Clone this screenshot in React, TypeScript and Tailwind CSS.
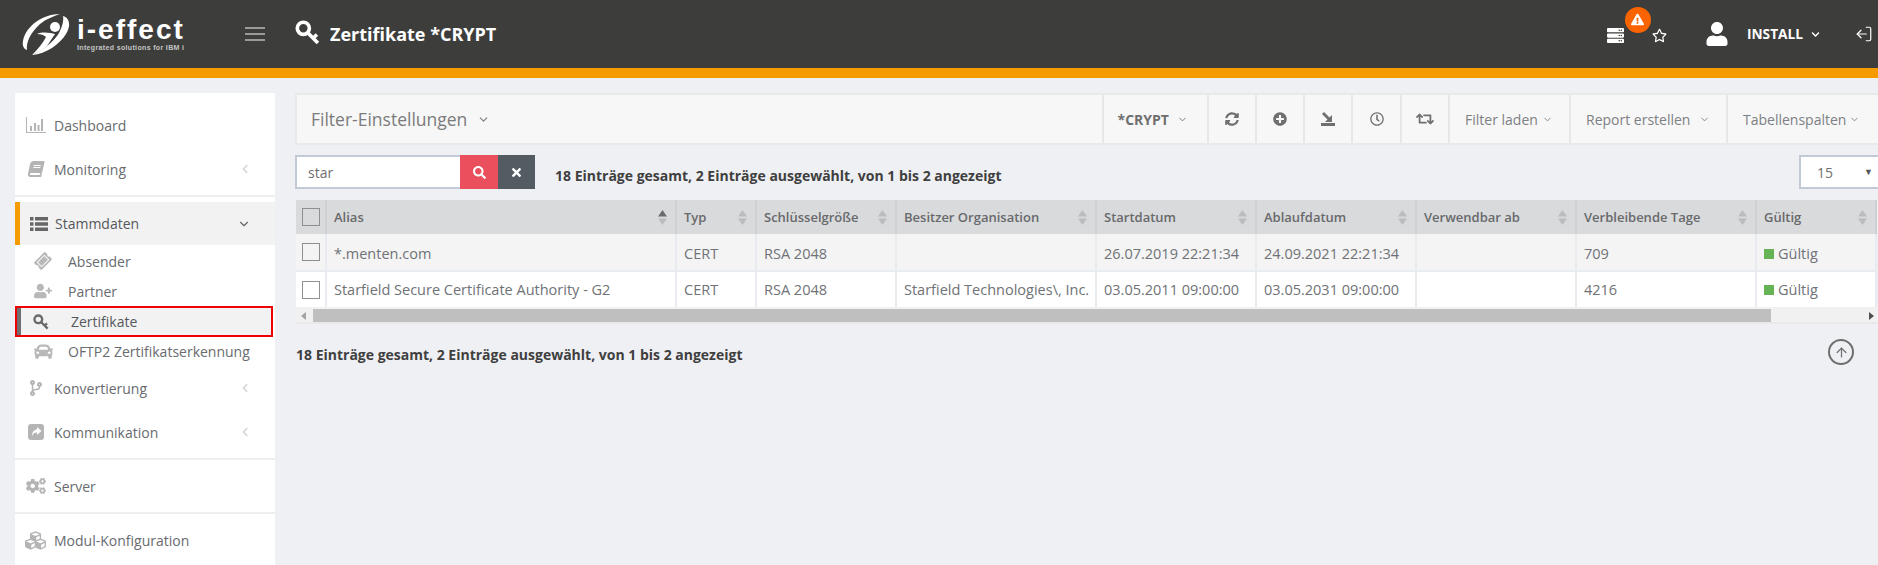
import type { ReactNode } from 'react';
import {
  FaBook, FaCar, FaChevronDown, FaChevronLeft, FaCodeBranch, FaCogs, FaCubes, FaExclamationTriangle,
  FaPlusCircle, FaRegClock, FaRegStar, FaRetweet, FaSearch, FaServer, FaSyncAlt, FaTicketAlt,
  FaTimes, FaUser, FaUserPlus,
} from 'react-icons/fa';
import { ArrowUp, ChevronDown, LogOut } from 'lucide-react';

const columns = [
  { label: 'Alias', width: 'w-[350px]', active: true },
  { label: 'Typ', width: 'w-[80px]' },
  { label: 'Schlüsselgröße', width: 'w-[140px]' },
  { label: 'Besitzer Organisation', width: 'w-[200px]' },
  { label: 'Startdatum', width: 'w-[160px]' },
  { label: 'Ablaufdatum', width: 'w-[160px]' },
  { label: 'Verwendbar ab', width: 'w-[160px]' },
  { label: 'Verbleibende Tage', width: 'w-[180px]' },
  { label: 'Gültig', width: 'w-[120px]' },
];

const rows = [
  ['*.menten.com', 'CERT', 'RSA 2048', '', '26.07.2019 22:21:34', '24.09.2021 22:21:34', '', '709'],
  ['Starfield Secure Certificate Authority - G2', 'CERT', 'RSA 2048', 'Starfield Technologies\\, Inc.', '03.05.2011 09:00:00', '03.05.2031 09:00:00', '', '4216'],
];

const statusText = '18 Einträge gesamt, 2 Einträge ausgewählt, von 1 bis 2 angezeigt';

function Logo() {
  return (
    <div className="flex w-[170px] items-center gap-[7px] text-white">
      <svg viewBox="0 0 48 42" className="h-[42px] w-[48px] shrink-0" fill="currentColor">
        <path d="M38 1C22 1 4 12 1 28C0 33 2 36 5 37C4 30 8 20 18 11C24 6 32 3 38 1Z" />
        <path d="M41 3C48 5 49 13 44 21C38 31 24 41 10 42C22 37 33 27 37 20C40 14 42 8 41 3Z" />
        <path d="M15 21C21 18 29 20 33 21L25 33C21 37 15 40 10 42C16 36 21 30 24 24C22 22 19 21 15 21Z" />
        <circle cx="33" cy="14" r="5" />
      </svg>
      <div className="flex flex-col leading-none">
        <span className="font-['Liberation_Sans',sans-serif] text-[28px] leading-[26px] font-bold tracking-[2px]">i-effect</span>
        <span className="font-['Liberation_Sans',sans-serif] text-[7px] leading-[9px] font-bold tracking-[0.35px] whitespace-nowrap text-[#c4c4c4]">Integrated solutions for IBM i</span>
      </div>
    </div>
  );
}

// outlined key, head top left
function KeyIcon({ className }: { className: string }) {
  return (
    <svg viewBox="0 0 24 24" className={className} fill="none" stroke="currentColor" strokeWidth="3.500">
      <circle cx="8" cy="8" r="5.800" />
      <path d="M12 12 22 22M17.500 17.500 21 14" />
    </svg>
  );
}

function ShareIcon() {
  return (
    <svg viewBox="0 0 16 16" className="size-[16px]">
      <rect width="16" height="16" rx="3" fill="currentColor" />
      <path d="M9 3l4.500 4L9 11V8.500C6.500 8.500 5 9.500 4 12c0-4 2-6.500 5-6.500z" fill="#ffffff" />
    </svg>
  );
}

function ListIcon() {
  return (
    <svg viewBox="0 0 18 14" className="h-[14px] w-[18px]" fill="currentColor">
      <path d="M0 0h3.500v3.500H0zM5 0h13v3.500H5zM0 5.200h3.500v3.500H0zM5 5.200h13v3.500H5zM0 10.400h3.500v3.500H0zM5 10.400h13v3.500H5z" />
    </svg>
  );
}

function Header() {
  return (
    <header className="flex h-[68px] shrink-0 items-center bg-[#3d3d3b] pl-[22px] text-white">
      <Logo />
      <div className="ml-[53px] flex w-[20px] flex-col gap-[4px]">
        <div className="h-[2px] bg-[#9a9a98]" />
        <div className="h-[2px] bg-[#9a9a98]" />
        <div className="h-[2px] bg-[#9a9a98]" />
      </div>
      <KeyIcon className="mt-[-3px] ml-[30px] size-[25px]" />
      <h1 className="ml-[10px] text-[18px] font-bold">Zertifikate *CRYPT</h1>
      <div className="ml-auto flex items-center">
        <div className="relative mt-[2px] mr-[28px]">
          <FaServer className="size-[17px]" />
          <span className="absolute top-[-20px] left-[18px] flex size-[26px] items-center justify-center rounded-full bg-[#fa6400]">
            <FaExclamationTriangle className="size-[13px]" />
          </span>
        </div>
        <FaRegStar className="mt-[2px] size-[15px]" />
        <FaUser className="ml-[38px] size-[24px]" />
        <span className="ml-[18px] text-[13.700px] font-bold">INSTALL</span>
        <FaChevronDown className="ml-[8px] size-[9px]" />
        <LogOut className="mr-[5px] ml-[35px] size-[18px] -scale-x-100" strokeWidth={1.6} />
      </div>
    </header>
  );
}

function BarChartIcon() {
  return (
    <svg viewBox="0 0 20 16" className="size-[20px]" fill="currentColor">
      <path d="M0 0h1v15h19v1H0z" />
      <path d="M4 9h2v5H4zM8 6h2v8H8zM11.500 8h2v6h-2zM15 2h2v12h-2z" />
    </svg>
  );
}

function NavItem({ icon, label, caret }: { icon: ReactNode; label: string; caret?: boolean }) {
  return (
    <div className="flex h-[44px] items-center text-[14px] text-[#686b6f]">
      <span className="flex w-[39px] justify-center pl-[2px] text-[#b4b4b4]">{icon}</span>
      <span>{label}</span>
      {caret && <FaChevronLeft className="mr-[25px] ml-auto size-[10px] text-[#d6d6d6]" />}
    </div>
  );
}

function SubItem({ icon, label, active }: { icon: ReactNode; label: string; active?: boolean }) {
  if (active) {
    return (
      <div className="mb-[-1px] flex h-[31px] w-[258px] items-center border-2 border-[#f00000] bg-[#f2f2f2] text-[14px] text-[#55585c]">
        <span className="h-full w-[4px] bg-[#707070]" />
        <span className="flex w-[38px] justify-center pl-[2px] text-[#6a6a6a]"><KeyIcon className="size-[16px]" /></span>
        <span className="ml-[12px]">{label}</span>
      </div>
    );
  }
  return (
    <div className="flex h-[30px] items-center text-[14px] whitespace-nowrap text-[#686b6f]">
      <span className="flex w-[52px] justify-center pl-[4px] text-[#b8b8b8]">{icon}</span>
      <span className="ml-[1px]">{label}</span>
    </div>
  );
}

function Sidebar() {
  return (
    <aside className="w-[260px] shrink-0 bg-white pt-[10px]">
      <NavItem icon={<BarChartIcon />} label="Dashboard" />
      <NavItem icon={<FaBook className="size-[16px] -skew-x-12" />} label="Monitoring" caret />
      <div className="mt-[4px] mb-[5px] h-[2px] bg-[#eeeeee]" />
      <div className="mb-[1px] flex h-[43px] items-center border-l-[5px] border-[#f59b00] bg-[#f2f2f2] text-[14px] text-[#55585c]">
        <span className="flex w-[35px] justify-center pl-[2px] text-[#666666]"><ListIcon /></span>
        <span>Stammdaten</span>
        <ChevronDown className="mr-[24px] ml-auto size-[14px] text-[#666666]" />
      </div>
      <SubItem icon={<FaTicketAlt className="size-[16px] -rotate-45" />} label="Absender" />
      <SubItem icon={<FaUserPlus className="size-[18px]" />} label="Partner" />
      <SubItem icon={null} label="Zertifikate" active />
      <SubItem icon={<FaCar className="size-[19px]" />} label="OFTP2 Zertifikatserkennung" />
      <NavItem icon={<FaCodeBranch className="size-[16px]" />} label="Konvertierung" caret />
      <NavItem icon={<ShareIcon />} label="Kommunikation" caret />
      <div className="mt-[4px] mb-[4px] h-[2px] bg-[#eeeeee]" />
      <NavItem icon={<FaCogs className="size-[20px]" />} label="Server" />
      <div className="mt-[4px] mb-[4px] h-[2px] bg-[#eeeeee]" />
      <NavItem icon={<FaCubes className="size-[21px]" />} label="Modul-Konfiguration" />
    </aside>
  );
}

function DownloadIcon() {
  return (
    <svg viewBox="0 0 14 14" className="size-[14px]" fill="currentColor">
      <path d="M0 11h14v3H0z" />
      <path d="M3 0 9 6 7 8 1 2z" />
      <path d="M11 3v7H4z" />
    </svg>
  );
}

function ToolButton({ children }: { children: ReactNode }) {
  return <div className="flex h-full w-[48.300px] items-center justify-center border-l-2 border-[#e7e7e7] text-[#6f6f6f]">{children}</div>;
}

function ToolMenu({ label, width, gap }: { label: string; width: string; gap: string }) {
  return (
    <div className={`flex h-full items-center border-l-2 border-[#e7e7e7] pl-[15px] text-[14px] text-[#7d8084] ${width}`}>
      <span>{label}</span>
      <ChevronDown className={`${gap} size-[11px]`} />
    </div>
  );
}

function FilterBar() {
  return (
    <div className="flex h-[52px] items-center border-y-2 border-l-2 border-[#e9e9e9] bg-[#f7f7f7] pl-[14px]">
      <div className="flex items-center text-[17.500px] text-[#7b7b7b]">
        Filter-Einstellungen
        <ChevronDown className="ml-[10px] size-[13px]" />
      </div>
      <div className="ml-auto flex h-full items-center">
        <div className="flex h-full w-[105px] items-center border-l-2 border-[#e7e7e7] pl-[14px] text-[14px] font-bold text-[#6f6f6f]">
          *CRYPT
          <ChevronDown className="ml-[8px] size-[11px]" />
        </div>
        <ToolButton><FaSyncAlt className="size-[14px]" /></ToolButton>
        <ToolButton><FaPlusCircle className="size-[14px]" /></ToolButton>
        <ToolButton><DownloadIcon /></ToolButton>
        <ToolButton><FaRegClock className="size-[14px]" /></ToolButton>
        <ToolButton><FaRetweet className="size-[18px]" /></ToolButton>
        <ToolMenu label="Filter laden" width="w-[121px]" gap="ml-[4px]" />
        <ToolMenu label="Report erstellen" width="w-[157px]" gap="ml-[9px]" />
        <ToolMenu label="Tabellenspalten" width="w-[152px]" gap="ml-[3px]" />
      </div>
    </div>
  );
}

function SortIcon({ active }: { active?: boolean }) {
  return (
    <svg viewBox="0 0 9 15" className="h-[15px] w-[9px] shrink-0">
      <path d="M4.500 0 9 6.500H0z" fill={active ? '#6b6b6b' : '#bcbcbc'} />
      <path d="M0 8.500h9L4.500 15z" fill="#bcbcbc" />
    </svg>
  );
}

function Checkbox() {
  return <span className="block size-[18px] border border-[#8f8f8f]" />;
}

function DataTable() {
  return (
    <div className="mt-[11px] ml-px overflow-hidden">
      <table className="w-[1580px] table-fixed border-collapse text-[14.500px] text-[#6f7276]">
        <colgroup>
          <col className="w-[30px]" />
          {columns.map((column) => <col key={column.label} className={column.width} />)}
        </colgroup>
        <thead>
          <tr className="h-[34px] bg-[#d9dadc] text-[13px] text-[#68696b]">
            <th className="border-r-2 border-[#cfd0d2] pl-[6px]"><Checkbox /></th>
            {columns.map((column) => (
              <th key={column.label} className="border-r-2 border-[#cfd0d2] pt-px pr-[8px] pl-[7px] text-left font-semibold">
                <div className="flex items-center justify-between whitespace-nowrap">
                  {column.label}
                  <SortIcon active={column.active} />
                </div>
              </th>
            ))}
          </tr>
        </thead>
        <tbody>
          {rows.map((row, index) => {
            const cellClass = index === 0
              ? 'border-r-2 border-[#e8ecf1] pt-[3px] pr-[8px] pl-[7px] whitespace-nowrap'
              : 'border-r-2 border-[#e8ecf1] pt-px pr-[8px] pl-[7px] whitespace-nowrap';
            return (
              <tr key={row[0]} className={index === 0 ? 'h-[37px] border-b-2 border-[#e8ecf1] bg-[#f4f4f4]' : 'h-[36px] bg-white'}>
                <td className="border-r-2 border-[#e8ecf1] pl-[6px]"><Checkbox /></td>
                {row.map((cell, cellIndex) => (
                  <td key={cellIndex} className={cellClass}>{cell}</td>
                ))}
                <td className={cellClass}>
                  <div className="flex items-center gap-[4px]">
                    <span className="size-[10px] bg-[#65b354]" />
                    Gültig
                  </div>
                </td>
              </tr>
            );
          })}
        </tbody>
      </table>
      <div className="flex h-[17px] items-center border-b-2 border-[#e9e9ec] bg-[#f1f1f1] pt-[2px]">
        <span className="w-[17px] pl-[5px] text-[#a3a3a3]">
          <svg viewBox="0 0 5 8" className="h-[8px] w-[5px]" fill="currentColor"><path d="M5 0v8L0 4z" /></svg>
        </span>
        <div className="h-[13px] w-[1458px] bg-[#bfbfbf]" />
        <span className="ml-[98px] text-[#505050]">
          <svg viewBox="0 0 5 8" className="h-[8px] w-[5px]" fill="currentColor"><path d="M0 0v8l5-4z" /></svg>
        </span>
      </div>
    </div>
  );
}

function Main() {
  return (
    <main className="ml-[20px] min-w-0 flex-1">
      <FilterBar />
      <div className="mt-[10px] flex h-[34px] items-center">
        <div className="flex h-full w-[165px] items-center border-2 border-r-0 border-[#c2cad8] bg-white pl-[11px] text-[14px] text-[#6f6f6f]">star</div>
        <div className="flex h-full w-[38px] items-center justify-center bg-[#ea4f5d] text-white"><FaSearch className="size-[13px]" /></div>
        <div className="flex h-full w-[37px] items-center justify-center bg-[#525c62] text-white"><FaTimes className="size-[13px]" /></div>
        <p className="ml-[20px] pt-[6px] text-[14px] font-bold text-[#3f3f3f]">{statusText}</p>
        <div className="ml-auto flex h-full w-[79px] items-center justify-between border-y-2 border-l-2 border-[#c2cad8] bg-white pr-[5px] pl-[16px] text-[14px] text-[#6f6f6f]">
          15
          <span className="text-[9px] text-[#555555]">▼</span>
        </div>
      </div>
      <DataTable />
      <div className="mt-[15px] flex items-center justify-between pr-[24px] pl-px">
        <p className="pt-[4px] text-[14px] font-bold text-[#3f3f3f]">{statusText}</p>
        <span className="flex size-[26px] items-center justify-center rounded-full border-2 border-[#6f6f6f] text-[#6f6f6f]">
          <ArrowUp className="size-[15px]" strokeWidth={2} />
        </span>
      </div>
    </main>
  );
}

export default function App() {
  return (
    <div className="flex h-screen flex-col overflow-hidden bg-[#eff0f4] font-['Open_Sans',sans-serif]">
      <Header />
      <div className="h-[10px] shrink-0 bg-[#f59b00]" />
      <div className="flex min-h-0 flex-1 pt-[15px] pl-[15px]">
        <Sidebar />
        <Main />
      </div>
    </div>
  );
}
